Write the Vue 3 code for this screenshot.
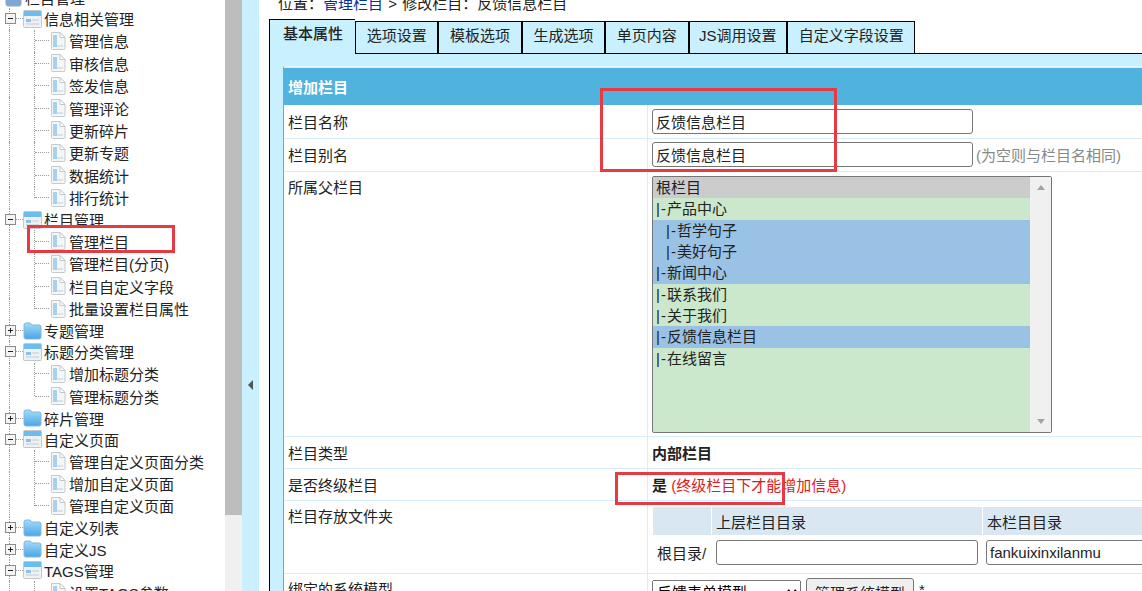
<template>
  <div class="page">
    <aside class="sidebar">
      <div
        v-for="item in tree"
        :key="item.text"
        class="row"
        :class="[item.type, { last: item.last }]"
      >
        <template v-if="item.type === 'leaf'">
          <span class="hline"></span>
          <svg class="leaf-icon" width="16" height="18" viewBox="0 0 16 18">
            <path d="M1.5.5H10L15 5.5V16.5q0 1-1 1H2.5q-1 0-1-1Z" fill="#f4f6f8" stroke="#c4cacf" />
            <path d="M10 .5V5.5H15Z" fill="#fff" stroke="#c4cacf" />
            <rect x="3" y="3" width="4" height="12" fill="#a9d0ec" />
            <rect x="7" y="13" width="6" height="2" fill="#d9e3ea" />
          </svg>
        </template>
        <template v-else-if="item.type === 'root'">
          <svg width="18" height="18" viewBox="0 0 18 18">
            <rect x="1" y="1" width="15" height="16" rx="2" fill="#7fa6d6" stroke="#99a5b5" />
            <rect x="4" y="2" width="11" height="9" fill="#dfe9f5" />
          </svg>
        </template>
        <template v-else>
          <svg class="toggle" width="11" height="11" viewBox="0 0 11 11">
            <rect x=".5" y=".5" width="10" height="10" fill="#f4f4f4" stroke="#8c8c8c" />
            <path d="M3 5.5H8" stroke="#222" />
            <path v-if="item.type === 'closed'" d="M5.5 3V8" stroke="#222" />
          </svg>
          <span class="node-line"></span>
          <svg v-if="item.type === 'open'" class="node-icon" width="20" height="18" viewBox="0 0 20 18">
            <rect x=".5" y=".5" width="18" height="17" rx="1" fill="#eef2f5" stroke="#c2c8cd" />
            <rect x="1" y="1" width="17" height="5" fill="#6cbcee" />
            <rect x="3" y="9" width="5" height="3" fill="#8fc0e8" />
            <path d="M9 10H16M3 14H16" stroke="#c2ccd3" />
          </svg>
          <svg v-else class="node-icon" width="20" height="18" viewBox="0 0 20 18">
            <defs>
              <linearGradient id="folderFill" x1="0" y1="0" x2="0" y2="1">
                <stop offset="0" stop-color="#a5dbf8" />
                <stop offset="1" stop-color="#4aa6e6" />
              </linearGradient>
            </defs>
            <path d="M1 3q0-2 2-2H7l2 2H16q2 0 2 2V15q0 2-2 2H3q-2 0-2-2Z" fill="url(#folderFill)" stroke="#7fb8e0" />
          </svg>
        </template>
        <span class="label">{{ item.text }}</span>
      </div>
    </aside>

    <div class="scroll-col"><div class="scroll-thumb"></div></div>
    <div class="toggle-col"><span class="toggle-arrow"></span></div>

    <main class="main">
      <div class="crumbs">位置：<a class="crumb-link">管理栏目</a> &gt; 修改栏目：反馈信息栏目</div>

      <div class="tabs">
        <div
          v-for="(tab, i) in tabs"
          :key="tab"
          class="tab"
          :class="{ active: i === 0 }"
        >{{ tab }}</div>
      </div>

      <div class="panel">
        <table class="form-table">
          <colgroup>
            <col class="col-name" />
            <col />
          </colgroup>
          <tbody>
            <tr class="head-row">
              <td colspan="2">增加栏目</td>
            </tr>
            <tr class="r-name">
              <td class="name">栏目名称</td>
              <td class="val"><input class="text-input wide" value="反馈信息栏目" /></td>
            </tr>
            <tr class="r-alias">
              <td class="name">栏目别名</td>
              <td class="val">
                <input class="text-input wide" value="反馈信息栏目" />
                <span class="hint">(为空则与栏目名相同)</span>
              </td>
            </tr>
            <tr class="r-parent">
              <td class="name top">所属父栏目</td>
              <td class="val top">
                <div class="listbox">
                  <div class="options">
                    <div
                      v-for="opt in options"
                      :key="opt.text"
                      class="option"
                      :class="[opt.tone, { nested: opt.nested }]"
                    ><span v-if="opt.tone !== 'gray'" class="bar">|-</span>{{ opt.text }}</div>
                  </div>
                  <div class="list-scroll">
                    <span class="arrow-up"></span>
                    <span class="arrow-down"></span>
                  </div>
                </div>
              </td>
            </tr>
            <tr class="r-type">
              <td class="name">栏目类型</td>
              <td class="val"><b>内部栏目</b></td>
            </tr>
            <tr class="r-final">
              <td class="name">是否终级栏目</td>
              <td class="val"><b>是</b> <span class="note">(终级栏目下才能增加信息)</span></td>
            </tr>
            <tr class="r-folder">
              <td class="name top">栏目存放文件夹</td>
              <td class="val top">
                <table class="folder-table">
                  <colgroup>
                    <col class="c1" />
                    <col class="c2" />
                    <col />
                  </colgroup>
                  <tbody>
                    <tr class="folder-head">
                      <td></td>
                      <td>上层栏目目录</td>
                      <td>本栏目目录</td>
                    </tr>
                    <tr class="folder-body">
                      <td>根目录/</td>
                      <td><input class="text-input path" value="" /></td>
                      <td><input class="text-input path" value="fankuixinxilanmu" /></td>
                    </tr>
                  </tbody>
                </table>
              </td>
            </tr>
            <tr class="r-model">
              <td class="name top">绑定的系统模型</td>
              <td class="val top">
                <select class="model-select"><option>反馈表单模型</option></select>
                <button class="model-btn">管理系统模型</button>
                <span class="star">*</span>
              </td>
            </tr>
          </tbody>
        </table>
      </div>
    </main>

    <div class="mark mark-inputs"></div>
    <div class="mark mark-tree"></div>
    <div class="mark mark-final"></div>
  </div>
</template>

<script setup>
const tree = [
  { text: '栏目管理', type: 'root' },
  { text: '信息相关管理', type: 'open' },
  { text: '管理信息', type: 'leaf' },
  { text: '审核信息', type: 'leaf' },
  { text: '签发信息', type: 'leaf' },
  { text: '管理评论', type: 'leaf' },
  { text: '更新碎片', type: 'leaf' },
  { text: '更新专题', type: 'leaf' },
  { text: '数据统计', type: 'leaf' },
  { text: '排行统计', type: 'leaf', last: true },
  { text: '栏目管理 ', type: 'open' },
  { text: '管理栏目', type: 'leaf' },
  { text: '管理栏目(分页)', type: 'leaf' },
  { text: '栏目自定义字段', type: 'leaf' },
  { text: '批量设置栏目属性', type: 'leaf', last: true },
  { text: '专题管理', type: 'closed' },
  { text: '标题分类管理', type: 'open' },
  { text: '增加标题分类', type: 'leaf' },
  { text: '管理标题分类', type: 'leaf', last: true },
  { text: '碎片管理', type: 'closed' },
  { text: '自定义页面', type: 'open' },
  { text: '管理自定义页面分类', type: 'leaf' },
  { text: '增加自定义页面', type: 'leaf' },
  { text: '管理自定义页面', type: 'leaf', last: true },
  { text: '自定义列表', type: 'closed' },
  { text: '自定义JS', type: 'closed' },
  { text: 'TAGS管理', type: 'open' },
  { text: '设置TAGS参数', type: 'leaf' }
]

const tabs = ['基本属性', '选项设置', '模板选项', '生成选项', '单页内容', 'JS调用设置', '自定义字段设置']

const options = [
  { text: '根栏目', tone: 'gray' },
  { text: '产品中心', tone: 'green' },
  { text: '哲学句子', tone: 'blue', nested: true },
  { text: '美好句子', tone: 'blue', nested: true },
  { text: '新闻中心', tone: 'blue' },
  { text: '联系我们', tone: 'green' },
  { text: '关于我们', tone: 'green' },
  { text: '反馈信息栏目', tone: 'blue' },
  { text: '在线留言', tone: 'green' }
]
</script>

<style>
body {
  overflow: hidden;
}
</style>

<style scoped>
.page {
  position: relative;
  display: flex;
  width: 1142px;
  height: 591px;
  overflow: hidden;
  background: #fff;
  color: #222;
  font-family: "Liberation Sans", "Noto Sans CJK SC", sans-serif;
  font-size: 15px;
}

/* tree */
.sidebar {
  flex: none;
  width: 225px;
  margin-top: -13px;
}

.row {
  position: relative;
  display: flex;
  align-items: center;
  height: 21.25px;
  padding-left: 5px;
  white-space: nowrap;
}

.row.open::before,
.row.closed::before,
.row.leaf::before {
  content: "";
  position: absolute;
  left: 9px;
  top: 0;
  bottom: 0;
  border-left: 1px dotted #9a9a9a;
}

.row.root .label {
  margin-left: 2px;
}

.row.leaf {
  height: 22.45px;
  padding-left: 35px;
}

.row.leaf::after {
  content: "";
  position: absolute;
  left: 34px;
  top: 0;
  bottom: 0;
  border-left: 1px dotted #9a9a9a;
}

.row.leaf.last::after {
  bottom: 50%;
}

.hline {
  width: 14px;
  border-top: 1px dotted #9a9a9a;
}

.leaf-icon {
  flex: none;
  margin-left: 1px;
}

.row.leaf .label {
  margin-left: 3px;
}

.toggle {
  position: relative;
  flex: none;
}

.node-line {
  width: 7px;
  border-top: 1px dotted #9a9a9a;
}

.node-icon {
  flex: none;
}

.row.open .label,
.row.closed .label {
  margin-left: 1px;
}

/* middle strips */
.scroll-col {
  flex: none;
  width: 17px;
  background: #f0f0f0;
}

.scroll-thumb {
  height: 515px;
  background: #bdbdbd;
}

.toggle-col {
  flex: none;
  display: flex;
  align-items: center;
  justify-content: center;
  width: 17px;
  height: 770px;
  background: #c9f0ff;
}

.toggle-arrow {
  width: 0;
  height: 0;
  border-top: 5px solid transparent;
  border-bottom: 5px solid transparent;
  border-right: 5px solid #555;
}

/* right side */
.main {
  flex: none;
  width: 873px;
  margin-left: 10px;
  margin-top: -7px;
}

.crumbs {
  height: 26px;
  padding-left: 9px;
  line-height: 21px;
  word-spacing: 1px;
}

.crumb-link {
  color: #003399;
}

.tabs {
  display: flex;
  align-items: flex-start;
  height: 34px;
  border-bottom: 1px solid #000;
  box-sizing: content-box;
}

.tab {
  height: 31px;
  margin-top: 2px;
  padding: 0 10.7px;
  border: 1px solid #000;
  border-left: 0;
  border-bottom: 0;
  box-sizing: content-box;
  background: #c9f0ff;
  line-height: 27px;
  white-space: nowrap;
}

.tab + .tab {
  border-left: 1px solid #000;
}

.tab:nth-child(6) {
  padding: 0 9.5px;
}

.tab.active {
  position: relative;
  z-index: 1;
  width: 60px;
  height: 35px;
  margin-top: 0;
  padding: 0 12px 0 13px;
  border-left: 1px solid #000;
  border-right: 0;
  font-weight: 500;
  line-height: 27px;
}

.panel {
  min-height: 600px;
  padding: 12px 0 0 13px;
  border-left: 1px solid #000;
  background: #c9f0ff;
}

.form-table {
  width: 1000px;
  border-collapse: separate;
  border-spacing: 0;
  table-layout: fixed;
  border-left: 1px solid #4fb3dd;
  border-top: 1px solid #e6f8fe;
  background: #fff;
}

.col-name {
  width: 364px;
}

.form-table > tbody > tr > td {
  box-sizing: border-box;
  padding: 0 4px;
  border-bottom: 1px solid #d6eef7;
}

.form-table > tbody > .head-row > td {
  height: 38px;
  border-bottom: 0;
  border-top: 1px solid #c9f0ff;
  background: #4fb3dd;
  color: #fff;
  font-weight: 700;
}

.form-table > tbody > tr > td.name {
  border-right: 1px solid #d6eef7;
}

.r-name > td { height: 34px; }
.form-table > tbody > .r-alias > td { height: 33px; padding-bottom: 2px; }
.r-parent > td { height: 265px; }
.r-type > td { height: 32px; }
.r-final > td { height: 32px; }
.r-folder > td { height: 73px; }
.r-model > td { height: 40px; }

.form-table > tbody > tr > td.top {
  vertical-align: top;
  padding-top: 4px;
}

.text-input {
  box-sizing: border-box;
  height: 25px;
  padding: 1px 3px;
  border: 1px solid #767676;
  border-radius: 3px;
  background: #fff;
  color: #222;
  font: inherit;
  vertical-align: middle;
}

.text-input.wide {
  width: 321px;
}

.hint {
  margin-left: 3px;
  color: #888;
  vertical-align: middle;
}

.listbox {
  display: flex;
  box-sizing: border-box;
  width: 400px;
  height: 257px;
  border: 1px solid #767676;
  border-radius: 2px;
  background: #cce8cc;
}

.options {
  flex: 1;
}

.option {
  height: 21.33px;
  padding-left: 3px;
  line-height: 21px;
  white-space: nowrap;
}

.option.nested {
  padding-left: 13px;
}

.bar {
  letter-spacing: 1px;
}

.option.gray { background: #cccccc; }
.option.green { background: #cce8cc; }
.option.blue { background: #99c2e5; }

.list-scroll {
  position: relative;
  flex: none;
  display: flex;
  flex-direction: column;
  align-items: center;
  justify-content: space-between;
  box-sizing: border-box;
  width: 21px;
  padding: 8px 0 8px;
  background: #f0f0f0;
}

.arrow-up,
.arrow-down {
  width: 0;
  height: 0;
  border-left: 4px solid transparent;
  border-right: 4px solid transparent;
}

.arrow-up {
  border-bottom: 5px solid #a3a3a3;
}

.arrow-down {
  border-top: 5px solid #a3a3a3;
}

.note {
  color: #e01b1b;
}

.folder-table {
  width: 530px;
  margin-top: 2px;
  border-collapse: separate;
  border-spacing: 1px 0;
  table-layout: fixed;
}

.c1 { width: 58px; }
.c2 { width: 270px; }

.folder-head td {
  height: 28px;
  padding: 0 0 0 4px;
  background: #d9e7f3;
}

.folder-body td {
  height: 35px;
  padding: 0 4px;
}

.folder-body td:last-child {
  padding-left: 3px;
}

.text-input.path {
  width: 100%;
}

.model-select {
  box-sizing: border-box;
  width: 149px;
  height: 25px;
  margin-top: 2px;
  font: inherit;
  vertical-align: top;
}

.model-btn {
  box-sizing: border-box;
  width: 108px;
  height: 28px;
  margin-left: 5px;
  margin-top: 0;
  padding: 0;
  border: 1px solid #767676;
  border-radius: 3px;
  background: #efefef;
  color: #222;
  font: inherit;
  vertical-align: top;
}

.star {
  margin-left: 5px;
  vertical-align: -3px;
}

/* red annotation boxes over the screenshot */
.mark {
  position: absolute;
  box-sizing: border-box;
  border: 3px solid #e63b42;
  pointer-events: none;
}

.mark-inputs {
  left: 600px;
  top: 88px;
  width: 237px;
  height: 84px;
}

.mark-tree {
  left: 27px;
  top: 225px;
  width: 148px;
  height: 28px;
}

.mark-final {
  left: 615px;
  top: 472px;
  width: 170px;
  height: 33px;
}
</style>
